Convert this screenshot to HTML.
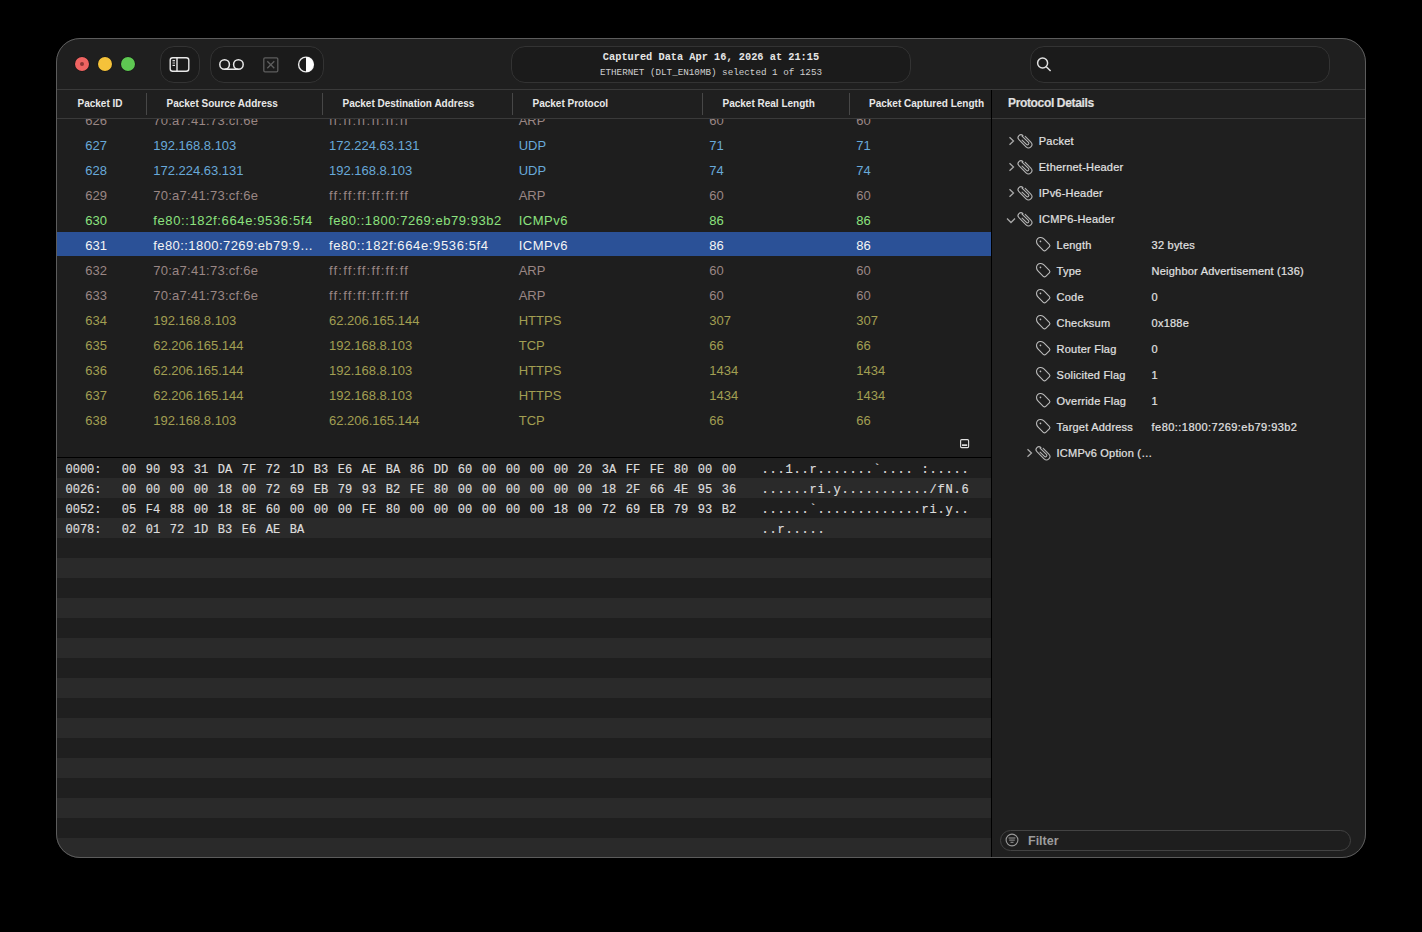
<!DOCTYPE html>
<html><head><meta charset="utf-8"><title>Packet Capture</title>
<style>
*{margin:0;padding:0;box-sizing:border-box}
html,body{width:1422px;height:932px;background:#000;overflow:hidden;font-family:"Liberation Sans",sans-serif}
#win{position:absolute;left:56px;top:38px;width:1310px;height:820px;border-radius:24px;background:#1f1f1f;overflow:hidden}
#inner{position:absolute;left:1px;top:0;width:1309px;height:820px}
#winborder{position:absolute;left:56px;top:38px;width:1310px;height:820px;border-radius:24px;border:1px solid #5c5c5c;pointer-events:none}
.a{position:absolute}
.tl{position:absolute;top:19px;width:14px;height:14px;border-radius:50%;box-shadow:0 0 0 0.6px rgba(0,0,0,0.45)}
.pill{position:absolute;top:8px;height:37px;border-radius:14px;background:#1b1b1b;border:1px solid #333}
.hline{position:absolute;height:1px;background:#3a3a3a}
.vsep{position:absolute;top:55px;width:1px;height:22px;background:#474747}
.hdr{position:absolute;top:61px;font-size:10px;line-height:10px;font-weight:700;color:#e8e8e8;white-space:pre}
.t{position:absolute;white-space:pre}
.cell{position:absolute;font-size:13px;line-height:16px;white-space:pre}
.hx{position:absolute;font-family:"Liberation Mono",monospace;font-size:12px;line-height:14px;color:#dcdcdc;white-space:pre;-webkit-text-stroke:0.2px #dcdcdc}
.tr{position:absolute;font-size:11px;line-height:14px;color:#e2e2e2;white-space:pre;letter-spacing:0.22px;-webkit-text-stroke:0.2px #e2e2e2}
</style></head><body>
<div id="win"><div id="inner">
<div class="tl" style="left:18px;background:#ef6462"><div class="a" style="left:5px;top:5px;width:4px;height:4px;border-radius:50%;background:#8d3634"></div></div>
<div class="tl" style="left:41px;background:#f5c23a"></div>
<div class="tl" style="left:64px;background:#5ec852"></div>
<div class="pill" style="left:103px;width:40px"></div>
<div class="pill" style="left:153px;width:114px"></div>
<div class="pill" style="left:454px;width:400px"></div>
<div class="pill" style="left:973px;width:300px"></div>

<svg class="a" style="left:0;top:0" width="1309" height="52" viewBox="0 0 1309 52">
 <g fill="none" stroke="#e8e8e8" stroke-width="1.4">
  <rect x="113.2" y="19.7" width="18.6" height="13.6" rx="2.5"/>
  <line x1="120" y1="19.7" x2="120" y2="33.3"/>
 </g>
 <g fill="#e8e8e8"><rect x="115.5" y="22.1" width="2.5" height="1.2"/><rect x="115.5" y="24.4" width="2.5" height="1.2" fill="#aaa"/><rect x="115.5" y="26.8" width="2.5" height="1.2"/></g>
 <g fill="none" stroke="#e8e8e8" stroke-width="1.5">
  <circle cx="167.6" cy="26.5" r="4.8"/>
  <circle cx="181.4" cy="26.5" r="4.8"/>
  <line x1="167.6" y1="31.3" x2="181.4" y2="31.3"/>
 </g>
 <g fill="none" stroke="#5e5e5e" stroke-width="1.3">
  <rect x="206.8" y="19.8" width="14" height="14" rx="1.2"/>
  <line x1="210.3" y1="23.3" x2="217.3" y2="30.3"/><line x1="217.3" y1="23.3" x2="210.3" y2="30.3"/>
 </g>
 <circle cx="249" cy="26.5" r="7.4" fill="none" stroke="#e8e8e8" stroke-width="1.4"/>
 <path d="M249 19.1 A7.4 7.4 0 0 1 249 33.9 Z" fill="#ffffff"/>
 <g fill="none" stroke="#e0e0e0" stroke-width="1.5">
  <circle cx="985.6" cy="25" r="5"/>
  <line x1="989.3" y1="28.7" x2="993.6" y2="33"/>
 </g>
</svg>
<div class="t" style="left:454px;width:400px;top:12.5px;text-align:center;font-family:'Liberation Mono',monospace;font-weight:700;font-size:10.3px;line-height:12px;color:#e6e6e6">Captured Data Apr 16, 2026 at 21:15</div>
<div class="t" style="left:454px;width:400px;top:29px;text-align:center;font-family:'Liberation Mono',monospace;font-size:9.25px;line-height:11px;color:#d0d0d0">ETHERNET (DLT_EN10MB) selected 1 of 1253</div>
<div class="hline" style="left:0;top:51px;width:1309px"></div>
<div class="hline" style="left:0;top:80px;width:934px"></div>
<div class="hline" style="left:935px;top:80px;width:374px"></div>
<div class="a" style="left:0;top:81px;width:934px;height:338px;overflow:hidden;background:#1e1e1e"><div class="cell" style="left:28.2px;top:-6px;color:#9a8684">626</div><div class="cell" style="left:96.2px;top:-6px;color:#9a8684;letter-spacing:0.275px">70:a7:41:73:cf:6e</div><div class="cell" style="left:272.0px;top:-6px;color:#9a8684;letter-spacing:1.175px">ff:ff:ff:ff:ff:ff</div><div class="cell" style="left:461.7px;top:-6px;color:#9a8684">ARP</div><div class="cell" style="left:652.2px;top:-6px;color:#9a8684">60</div><div class="cell" style="left:799.3px;top:-6px;color:#9a8684">60</div><div class="cell" style="left:28.2px;top:19px;color:#68a9d9">627</div><div class="cell" style="left:96.2px;top:19px;color:#68a9d9">192.168.8.103</div><div class="cell" style="left:272.0px;top:19px;color:#68a9d9">172.224.63.131</div><div class="cell" style="left:461.7px;top:19px;color:#68a9d9">UDP</div><div class="cell" style="left:652.2px;top:19px;color:#68a9d9">71</div><div class="cell" style="left:799.3px;top:19px;color:#68a9d9">71</div><div class="cell" style="left:28.2px;top:44px;color:#68a9d9">628</div><div class="cell" style="left:96.2px;top:44px;color:#68a9d9">172.224.63.131</div><div class="cell" style="left:272.0px;top:44px;color:#68a9d9">192.168.8.103</div><div class="cell" style="left:461.7px;top:44px;color:#68a9d9">UDP</div><div class="cell" style="left:652.2px;top:44px;color:#68a9d9">74</div><div class="cell" style="left:799.3px;top:44px;color:#68a9d9">74</div><div class="cell" style="left:28.2px;top:69px;color:#9a8684">629</div><div class="cell" style="left:96.2px;top:69px;color:#9a8684;letter-spacing:0.275px">70:a7:41:73:cf:6e</div><div class="cell" style="left:272.0px;top:69px;color:#9a8684;letter-spacing:1.175px">ff:ff:ff:ff:ff:ff</div><div class="cell" style="left:461.7px;top:69px;color:#9a8684">ARP</div><div class="cell" style="left:652.2px;top:69px;color:#9a8684">60</div><div class="cell" style="left:799.3px;top:69px;color:#9a8684">60</div><div class="cell" style="left:28.2px;top:94px;color:#8ce27f">630</div><div class="cell" style="left:96.2px;top:94px;color:#8ce27f;letter-spacing:0.630px">fe80::182f:664e:9536:5f4</div><div class="cell" style="left:272.0px;top:94px;color:#8ce27f;letter-spacing:0.554px">fe80::1800:7269:eb79:93b2</div><div class="cell" style="left:461.7px;top:94px;color:#8ce27f;letter-spacing:0.520px">ICMPv6</div><div class="cell" style="left:652.2px;top:94px;color:#8ce27f">86</div><div class="cell" style="left:799.3px;top:94px;color:#8ce27f">86</div><div class="a" style="left:0;top:113px;width:934px;height:24px;background:#2b5197"></div><div class="cell" style="left:28.2px;top:119px;color:#f4f4f4">631</div><div class="cell" style="left:96.2px;top:119px;color:#f4f4f4;letter-spacing:0.432px">fe80::1800:7269:eb79:9…</div><div class="cell" style="left:272.0px;top:119px;color:#f4f4f4;letter-spacing:0.630px">fe80::182f:664e:9536:5f4</div><div class="cell" style="left:461.7px;top:119px;color:#f4f4f4;letter-spacing:0.520px">ICMPv6</div><div class="cell" style="left:652.2px;top:119px;color:#f4f4f4">86</div><div class="cell" style="left:799.3px;top:119px;color:#f4f4f4">86</div><div class="cell" style="left:28.2px;top:144px;color:#9a8684">632</div><div class="cell" style="left:96.2px;top:144px;color:#9a8684;letter-spacing:0.275px">70:a7:41:73:cf:6e</div><div class="cell" style="left:272.0px;top:144px;color:#9a8684;letter-spacing:1.175px">ff:ff:ff:ff:ff:ff</div><div class="cell" style="left:461.7px;top:144px;color:#9a8684">ARP</div><div class="cell" style="left:652.2px;top:144px;color:#9a8684">60</div><div class="cell" style="left:799.3px;top:144px;color:#9a8684">60</div><div class="cell" style="left:28.2px;top:169px;color:#9a8684">633</div><div class="cell" style="left:96.2px;top:169px;color:#9a8684;letter-spacing:0.275px">70:a7:41:73:cf:6e</div><div class="cell" style="left:272.0px;top:169px;color:#9a8684;letter-spacing:1.175px">ff:ff:ff:ff:ff:ff</div><div class="cell" style="left:461.7px;top:169px;color:#9a8684">ARP</div><div class="cell" style="left:652.2px;top:169px;color:#9a8684">60</div><div class="cell" style="left:799.3px;top:169px;color:#9a8684">60</div><div class="cell" style="left:28.2px;top:194px;color:#a29f52">634</div><div class="cell" style="left:96.2px;top:194px;color:#a29f52">192.168.8.103</div><div class="cell" style="left:272.0px;top:194px;color:#a29f52">62.206.165.144</div><div class="cell" style="left:461.7px;top:194px;color:#a29f52">HTTPS</div><div class="cell" style="left:652.2px;top:194px;color:#a29f52">307</div><div class="cell" style="left:799.3px;top:194px;color:#a29f52">307</div><div class="cell" style="left:28.2px;top:219px;color:#a29f52">635</div><div class="cell" style="left:96.2px;top:219px;color:#a29f52">62.206.165.144</div><div class="cell" style="left:272.0px;top:219px;color:#a29f52">192.168.8.103</div><div class="cell" style="left:461.7px;top:219px;color:#a29f52">TCP</div><div class="cell" style="left:652.2px;top:219px;color:#a29f52">66</div><div class="cell" style="left:799.3px;top:219px;color:#a29f52">66</div><div class="cell" style="left:28.2px;top:244px;color:#a29f52">636</div><div class="cell" style="left:96.2px;top:244px;color:#a29f52">62.206.165.144</div><div class="cell" style="left:272.0px;top:244px;color:#a29f52">192.168.8.103</div><div class="cell" style="left:461.7px;top:244px;color:#a29f52">HTTPS</div><div class="cell" style="left:652.2px;top:244px;color:#a29f52">1434</div><div class="cell" style="left:799.3px;top:244px;color:#a29f52">1434</div><div class="cell" style="left:28.2px;top:269px;color:#a29f52">637</div><div class="cell" style="left:96.2px;top:269px;color:#a29f52">62.206.165.144</div><div class="cell" style="left:272.0px;top:269px;color:#a29f52">192.168.8.103</div><div class="cell" style="left:461.7px;top:269px;color:#a29f52">HTTPS</div><div class="cell" style="left:652.2px;top:269px;color:#a29f52">1434</div><div class="cell" style="left:799.3px;top:269px;color:#a29f52">1434</div><div class="cell" style="left:28.2px;top:294px;color:#a29f52">638</div><div class="cell" style="left:96.2px;top:294px;color:#a29f52">192.168.8.103</div><div class="cell" style="left:272.0px;top:294px;color:#a29f52">62.206.165.144</div><div class="cell" style="left:461.7px;top:294px;color:#a29f52">TCP</div><div class="cell" style="left:652.2px;top:294px;color:#a29f52">66</div><div class="cell" style="left:799.3px;top:294px;color:#a29f52">66</div></div>
<div class="vsep" style="left:89.0px"></div>
<div class="vsep" style="left:265.0px"></div>
<div class="vsep" style="left:455.0px"></div>
<div class="vsep" style="left:645.0px"></div>
<div class="vsep" style="left:792.0px"></div>
<div class="hdr" style="left:20.5px">Packet ID</div>
<div class="hdr" style="left:109.5px">Packet Source Address</div>
<div class="hdr" style="left:285.5px">Packet Destination Address</div>
<div class="hdr" style="left:475.5px">Packet Protocol</div>
<div class="hdr" style="left:665.5px">Packet Real Length</div>
<div class="hdr" style="left:812.0px">Packet Captured Length</div>
<svg class="a" style="left:903px;top:401px" width="10" height="10" viewBox="0 0 10 10"><rect x="0.6" y="0.6" width="8" height="8" rx="1.1" fill="none" stroke="#e0e0e0" stroke-width="1.15"/><rect x="2" y="5.3" width="5.2" height="1.7" fill="#dcdcdc"/></svg>
<div class="a" style="left:934px;top:52px;width:1px;height:768px;background:#000"></div>
<div class="a" style="left:0;top:419px;width:934px;height:1px;background:#000"></div>
<div class="a" style="left:0;top:420px;width:934px;height:400px;overflow:hidden"><div class="a" style="left:0;top:0px;width:934px;height:20px;background:#1f1f1f"></div><div class="a" style="left:0;top:20px;width:934px;height:20px;background:#2a2a2a"></div><div class="a" style="left:0;top:40px;width:934px;height:20px;background:#1f1f1f"></div><div class="a" style="left:0;top:60px;width:934px;height:20px;background:#2a2a2a"></div><div class="a" style="left:0;top:80px;width:934px;height:20px;background:#1f1f1f"></div><div class="a" style="left:0;top:100px;width:934px;height:20px;background:#2a2a2a"></div><div class="a" style="left:0;top:120px;width:934px;height:20px;background:#1f1f1f"></div><div class="a" style="left:0;top:140px;width:934px;height:20px;background:#2a2a2a"></div><div class="a" style="left:0;top:160px;width:934px;height:20px;background:#1f1f1f"></div><div class="a" style="left:0;top:180px;width:934px;height:20px;background:#2a2a2a"></div><div class="a" style="left:0;top:200px;width:934px;height:20px;background:#1f1f1f"></div><div class="a" style="left:0;top:220px;width:934px;height:20px;background:#2a2a2a"></div><div class="a" style="left:0;top:240px;width:934px;height:20px;background:#1f1f1f"></div><div class="a" style="left:0;top:260px;width:934px;height:20px;background:#2a2a2a"></div><div class="a" style="left:0;top:280px;width:934px;height:20px;background:#1f1f1f"></div><div class="a" style="left:0;top:300px;width:934px;height:20px;background:#2a2a2a"></div><div class="a" style="left:0;top:320px;width:934px;height:20px;background:#1f1f1f"></div><div class="a" style="left:0;top:340px;width:934px;height:20px;background:#2a2a2a"></div><div class="a" style="left:0;top:360px;width:934px;height:20px;background:#1f1f1f"></div><div class="a" style="left:0;top:380px;width:934px;height:20px;background:#2a2a2a"></div><div class="hx" style="left:8.5px;top:5px">0000:</div><div class="hx" style="left:64.8px;top:5px">00</div><div class="hx" style="left:88.8px;top:5px">90</div><div class="hx" style="left:112.8px;top:5px">93</div><div class="hx" style="left:136.8px;top:5px">31</div><div class="hx" style="left:160.8px;top:5px">DA</div><div class="hx" style="left:184.8px;top:5px">7F</div><div class="hx" style="left:208.8px;top:5px">72</div><div class="hx" style="left:232.8px;top:5px">1D</div><div class="hx" style="left:256.8px;top:5px">B3</div><div class="hx" style="left:280.8px;top:5px">E6</div><div class="hx" style="left:304.8px;top:5px">AE</div><div class="hx" style="left:328.8px;top:5px">BA</div><div class="hx" style="left:352.8px;top:5px">86</div><div class="hx" style="left:376.8px;top:5px">DD</div><div class="hx" style="left:400.8px;top:5px">60</div><div class="hx" style="left:424.8px;top:5px">00</div><div class="hx" style="left:448.8px;top:5px">00</div><div class="hx" style="left:472.8px;top:5px">00</div><div class="hx" style="left:496.8px;top:5px">00</div><div class="hx" style="left:520.8px;top:5px">20</div><div class="hx" style="left:544.8px;top:5px">3A</div><div class="hx" style="left:568.8px;top:5px">FF</div><div class="hx" style="left:592.8px;top:5px">FE</div><div class="hx" style="left:616.8px;top:5px">80</div><div class="hx" style="left:640.8px;top:5px">00</div><div class="hx" style="left:664.8px;top:5px">00</div><div class="hx" style="left:704.5px;top:5px;letter-spacing:0.80px">...1..r.......`.... :.....</div><div class="hx" style="left:8.5px;top:25px">0026:</div><div class="hx" style="left:64.8px;top:25px">00</div><div class="hx" style="left:88.8px;top:25px">00</div><div class="hx" style="left:112.8px;top:25px">00</div><div class="hx" style="left:136.8px;top:25px">00</div><div class="hx" style="left:160.8px;top:25px">18</div><div class="hx" style="left:184.8px;top:25px">00</div><div class="hx" style="left:208.8px;top:25px">72</div><div class="hx" style="left:232.8px;top:25px">69</div><div class="hx" style="left:256.8px;top:25px">EB</div><div class="hx" style="left:280.8px;top:25px">79</div><div class="hx" style="left:304.8px;top:25px">93</div><div class="hx" style="left:328.8px;top:25px">B2</div><div class="hx" style="left:352.8px;top:25px">FE</div><div class="hx" style="left:376.8px;top:25px">80</div><div class="hx" style="left:400.8px;top:25px">00</div><div class="hx" style="left:424.8px;top:25px">00</div><div class="hx" style="left:448.8px;top:25px">00</div><div class="hx" style="left:472.8px;top:25px">00</div><div class="hx" style="left:496.8px;top:25px">00</div><div class="hx" style="left:520.8px;top:25px">00</div><div class="hx" style="left:544.8px;top:25px">18</div><div class="hx" style="left:568.8px;top:25px">2F</div><div class="hx" style="left:592.8px;top:25px">66</div><div class="hx" style="left:616.8px;top:25px">4E</div><div class="hx" style="left:640.8px;top:25px">95</div><div class="hx" style="left:664.8px;top:25px">36</div><div class="hx" style="left:704.5px;top:25px;letter-spacing:0.80px">......ri.y.........../fN.6</div><div class="hx" style="left:8.5px;top:45px">0052:</div><div class="hx" style="left:64.8px;top:45px">05</div><div class="hx" style="left:88.8px;top:45px">F4</div><div class="hx" style="left:112.8px;top:45px">88</div><div class="hx" style="left:136.8px;top:45px">00</div><div class="hx" style="left:160.8px;top:45px">18</div><div class="hx" style="left:184.8px;top:45px">8E</div><div class="hx" style="left:208.8px;top:45px">60</div><div class="hx" style="left:232.8px;top:45px">00</div><div class="hx" style="left:256.8px;top:45px">00</div><div class="hx" style="left:280.8px;top:45px">00</div><div class="hx" style="left:304.8px;top:45px">FE</div><div class="hx" style="left:328.8px;top:45px">80</div><div class="hx" style="left:352.8px;top:45px">00</div><div class="hx" style="left:376.8px;top:45px">00</div><div class="hx" style="left:400.8px;top:45px">00</div><div class="hx" style="left:424.8px;top:45px">00</div><div class="hx" style="left:448.8px;top:45px">00</div><div class="hx" style="left:472.8px;top:45px">00</div><div class="hx" style="left:496.8px;top:45px">18</div><div class="hx" style="left:520.8px;top:45px">00</div><div class="hx" style="left:544.8px;top:45px">72</div><div class="hx" style="left:568.8px;top:45px">69</div><div class="hx" style="left:592.8px;top:45px">EB</div><div class="hx" style="left:616.8px;top:45px">79</div><div class="hx" style="left:640.8px;top:45px">93</div><div class="hx" style="left:664.8px;top:45px">B2</div><div class="hx" style="left:704.5px;top:45px;letter-spacing:0.80px">......`.............ri.y..</div><div class="hx" style="left:8.5px;top:65px">0078:</div><div class="hx" style="left:64.8px;top:65px">02</div><div class="hx" style="left:88.8px;top:65px">01</div><div class="hx" style="left:112.8px;top:65px">72</div><div class="hx" style="left:136.8px;top:65px">1D</div><div class="hx" style="left:160.8px;top:65px">B3</div><div class="hx" style="left:184.8px;top:65px">E6</div><div class="hx" style="left:208.8px;top:65px">AE</div><div class="hx" style="left:232.8px;top:65px">BA</div><div class="hx" style="left:704.5px;top:65px;letter-spacing:0.80px">..r.....</div></div>
<div class="t" style="left:951px;top:58.3px;font-size:12px;line-height:14px;font-weight:700;letter-spacing:-0.35px;color:#e0e0e0;-webkit-text-stroke:0.15px #e0e0e0">Protocol Details</div>
<svg class="a" style="left:950.5px;top:97.8px" width="8" height="10" viewBox="0 0 8 10"><path d="M1.5 1.2 L5.5 5 L1.5 8.8" fill="none" stroke="#a8a8a8" stroke-width="1.3"/></svg>
<svg class="a" style="left:956.0px;top:91.0px" width="24" height="24" viewBox="-12 -12 24 24"><path transform="rotate(-45) scale(0.87)" d="M3.9 -3.6 L3.9 5.6 A3.9 3.9 0 0 1 -3.9 5.6 L-3.9 -6 A3.3 3.3 0 0 1 2.7 -6 M1.6 -6.4 L1.6 4 A1.6 1.6 0 0 1 -1.6 4 L-1.6 -3.2" fill="none" stroke="#b4b4b4" stroke-width="1.25" stroke-linecap="round"/></svg>
<div class="tr" style="left:981.8px;top:95.8px">Packet</div>
<svg class="a" style="left:950.5px;top:123.8px" width="8" height="10" viewBox="0 0 8 10"><path d="M1.5 1.2 L5.5 5 L1.5 8.8" fill="none" stroke="#a8a8a8" stroke-width="1.3"/></svg>
<svg class="a" style="left:956.0px;top:117.0px" width="24" height="24" viewBox="-12 -12 24 24"><path transform="rotate(-45) scale(0.87)" d="M3.9 -3.6 L3.9 5.6 A3.9 3.9 0 0 1 -3.9 5.6 L-3.9 -6 A3.3 3.3 0 0 1 2.7 -6 M1.6 -6.4 L1.6 4 A1.6 1.6 0 0 1 -1.6 4 L-1.6 -3.2" fill="none" stroke="#b4b4b4" stroke-width="1.25" stroke-linecap="round"/></svg>
<div class="tr" style="left:981.8px;top:121.8px">Ethernet-Header</div>
<svg class="a" style="left:950.5px;top:149.8px" width="8" height="10" viewBox="0 0 8 10"><path d="M1.5 1.2 L5.5 5 L1.5 8.8" fill="none" stroke="#a8a8a8" stroke-width="1.3"/></svg>
<svg class="a" style="left:956.0px;top:143.0px" width="24" height="24" viewBox="-12 -12 24 24"><path transform="rotate(-45) scale(0.87)" d="M3.9 -3.6 L3.9 5.6 A3.9 3.9 0 0 1 -3.9 5.6 L-3.9 -6 A3.3 3.3 0 0 1 2.7 -6 M1.6 -6.4 L1.6 4 A1.6 1.6 0 0 1 -1.6 4 L-1.6 -3.2" fill="none" stroke="#b4b4b4" stroke-width="1.25" stroke-linecap="round"/></svg>
<div class="tr" style="left:981.8px;top:147.8px">IPv6-Header</div>
<svg class="a" style="left:948.8px;top:178.8px" width="10" height="8" viewBox="0 0 10 8"><path d="M1 1.5 L5 5.5 L9 1.5" fill="none" stroke="#a8a8a8" stroke-width="1.3"/></svg>
<svg class="a" style="left:956.0px;top:169.0px" width="24" height="24" viewBox="-12 -12 24 24"><path transform="rotate(-45) scale(0.87)" d="M3.9 -3.6 L3.9 5.6 A3.9 3.9 0 0 1 -3.9 5.6 L-3.9 -6 A3.3 3.3 0 0 1 2.7 -6 M1.6 -6.4 L1.6 4 A1.6 1.6 0 0 1 -1.6 4 L-1.6 -3.2" fill="none" stroke="#b4b4b4" stroke-width="1.25" stroke-linecap="round"/></svg>
<div class="tr" style="left:981.8px;top:173.8px">ICMP6-Header</div>
<svg class="a" style="left:974.0px;top:194.4px" width="24" height="24" viewBox="-12 -12 24 24"><path transform="rotate(-45) scale(0.93)" d="M-4.6 -2.8 L-4.6 5 Q-4.6 6.9 -2.7 6.9 L2.7 6.9 Q4.6 6.9 4.6 5 L4.6 -2.8 C4.6 -5.6 2.6 -8.2 0 -8.2 C-2.6 -8.2 -4.6 -5.6 -4.6 -2.8 Z" fill="none" stroke="#bcbcbc" stroke-width="1.15" stroke-linejoin="round"/><circle transform="rotate(-45)" cx="0" cy="-3.6" r="0.85" fill="#bcbcbc"/></svg>
<div class="tr" style="left:999.6px;top:199.8px">Length</div>
<div class="tr" style="left:1094.6px;top:199.8px">32 bytes</div>
<svg class="a" style="left:974.0px;top:220.4px" width="24" height="24" viewBox="-12 -12 24 24"><path transform="rotate(-45) scale(0.93)" d="M-4.6 -2.8 L-4.6 5 Q-4.6 6.9 -2.7 6.9 L2.7 6.9 Q4.6 6.9 4.6 5 L4.6 -2.8 C4.6 -5.6 2.6 -8.2 0 -8.2 C-2.6 -8.2 -4.6 -5.6 -4.6 -2.8 Z" fill="none" stroke="#bcbcbc" stroke-width="1.15" stroke-linejoin="round"/><circle transform="rotate(-45)" cx="0" cy="-3.6" r="0.85" fill="#bcbcbc"/></svg>
<div class="tr" style="left:999.6px;top:225.8px">Type</div>
<div class="tr" style="left:1094.6px;top:225.8px">Neighbor Advertisement (136)</div>
<svg class="a" style="left:974.0px;top:246.4px" width="24" height="24" viewBox="-12 -12 24 24"><path transform="rotate(-45) scale(0.93)" d="M-4.6 -2.8 L-4.6 5 Q-4.6 6.9 -2.7 6.9 L2.7 6.9 Q4.6 6.9 4.6 5 L4.6 -2.8 C4.6 -5.6 2.6 -8.2 0 -8.2 C-2.6 -8.2 -4.6 -5.6 -4.6 -2.8 Z" fill="none" stroke="#bcbcbc" stroke-width="1.15" stroke-linejoin="round"/><circle transform="rotate(-45)" cx="0" cy="-3.6" r="0.85" fill="#bcbcbc"/></svg>
<div class="tr" style="left:999.6px;top:251.8px">Code</div>
<div class="tr" style="left:1094.6px;top:251.8px">0</div>
<svg class="a" style="left:974.0px;top:272.4px" width="24" height="24" viewBox="-12 -12 24 24"><path transform="rotate(-45) scale(0.93)" d="M-4.6 -2.8 L-4.6 5 Q-4.6 6.9 -2.7 6.9 L2.7 6.9 Q4.6 6.9 4.6 5 L4.6 -2.8 C4.6 -5.6 2.6 -8.2 0 -8.2 C-2.6 -8.2 -4.6 -5.6 -4.6 -2.8 Z" fill="none" stroke="#bcbcbc" stroke-width="1.15" stroke-linejoin="round"/><circle transform="rotate(-45)" cx="0" cy="-3.6" r="0.85" fill="#bcbcbc"/></svg>
<div class="tr" style="left:999.6px;top:277.8px">Checksum</div>
<div class="tr" style="left:1094.6px;top:277.8px">0x188e</div>
<svg class="a" style="left:974.0px;top:298.4px" width="24" height="24" viewBox="-12 -12 24 24"><path transform="rotate(-45) scale(0.93)" d="M-4.6 -2.8 L-4.6 5 Q-4.6 6.9 -2.7 6.9 L2.7 6.9 Q4.6 6.9 4.6 5 L4.6 -2.8 C4.6 -5.6 2.6 -8.2 0 -8.2 C-2.6 -8.2 -4.6 -5.6 -4.6 -2.8 Z" fill="none" stroke="#bcbcbc" stroke-width="1.15" stroke-linejoin="round"/><circle transform="rotate(-45)" cx="0" cy="-3.6" r="0.85" fill="#bcbcbc"/></svg>
<div class="tr" style="left:999.6px;top:303.8px">Router Flag</div>
<div class="tr" style="left:1094.6px;top:303.8px">0</div>
<svg class="a" style="left:974.0px;top:324.4px" width="24" height="24" viewBox="-12 -12 24 24"><path transform="rotate(-45) scale(0.93)" d="M-4.6 -2.8 L-4.6 5 Q-4.6 6.9 -2.7 6.9 L2.7 6.9 Q4.6 6.9 4.6 5 L4.6 -2.8 C4.6 -5.6 2.6 -8.2 0 -8.2 C-2.6 -8.2 -4.6 -5.6 -4.6 -2.8 Z" fill="none" stroke="#bcbcbc" stroke-width="1.15" stroke-linejoin="round"/><circle transform="rotate(-45)" cx="0" cy="-3.6" r="0.85" fill="#bcbcbc"/></svg>
<div class="tr" style="left:999.6px;top:329.8px">Solicited Flag</div>
<div class="tr" style="left:1094.6px;top:329.8px">1</div>
<svg class="a" style="left:974.0px;top:350.4px" width="24" height="24" viewBox="-12 -12 24 24"><path transform="rotate(-45) scale(0.93)" d="M-4.6 -2.8 L-4.6 5 Q-4.6 6.9 -2.7 6.9 L2.7 6.9 Q4.6 6.9 4.6 5 L4.6 -2.8 C4.6 -5.6 2.6 -8.2 0 -8.2 C-2.6 -8.2 -4.6 -5.6 -4.6 -2.8 Z" fill="none" stroke="#bcbcbc" stroke-width="1.15" stroke-linejoin="round"/><circle transform="rotate(-45)" cx="0" cy="-3.6" r="0.85" fill="#bcbcbc"/></svg>
<div class="tr" style="left:999.6px;top:355.8px">Override Flag</div>
<div class="tr" style="left:1094.6px;top:355.8px">1</div>
<svg class="a" style="left:974.0px;top:376.4px" width="24" height="24" viewBox="-12 -12 24 24"><path transform="rotate(-45) scale(0.93)" d="M-4.6 -2.8 L-4.6 5 Q-4.6 6.9 -2.7 6.9 L2.7 6.9 Q4.6 6.9 4.6 5 L4.6 -2.8 C4.6 -5.6 2.6 -8.2 0 -8.2 C-2.6 -8.2 -4.6 -5.6 -4.6 -2.8 Z" fill="none" stroke="#bcbcbc" stroke-width="1.15" stroke-linejoin="round"/><circle transform="rotate(-45)" cx="0" cy="-3.6" r="0.85" fill="#bcbcbc"/></svg>
<div class="tr" style="left:999.6px;top:381.8px">Target Address</div>
<div class="tr" style="left:1094.6px;top:381.8px;letter-spacing:0.45px">fe80::1800:7269:eb79:93b2</div>
<svg class="a" style="left:968.5px;top:409.8px" width="8" height="10" viewBox="0 0 8 10"><path d="M1.5 1.2 L5.5 5 L1.5 8.8" fill="none" stroke="#a8a8a8" stroke-width="1.3"/></svg>
<svg class="a" style="left:974.0px;top:403.0px" width="24" height="24" viewBox="-12 -12 24 24"><path transform="rotate(-45) scale(0.87)" d="M3.9 -3.6 L3.9 5.6 A3.9 3.9 0 0 1 -3.9 5.6 L-3.9 -6 A3.3 3.3 0 0 1 2.7 -6 M1.6 -6.4 L1.6 4 A1.6 1.6 0 0 1 -1.6 4 L-1.6 -3.2" fill="none" stroke="#b4b4b4" stroke-width="1.25" stroke-linecap="round"/></svg>
<div class="tr" style="left:999.6px;top:407.8px">ICMPv6 Option (…</div>
<div class="a" style="left:943px;top:792px;width:351px;height:21px;border-radius:10.5px;border:1.3px solid #434343;background:#1e1e1e"></div>
<svg class="a" style="left:947px;top:794px" width="16" height="16" viewBox="0 0 16 16"><circle cx="8" cy="8" r="5.9" fill="none" stroke="#9a9a9a" stroke-width="1.1"/><line x1="4.6" y1="6" x2="11.4" y2="6" stroke="#9a9a9a" stroke-width="1"/><line x1="5.2" y1="8.1" x2="10.8" y2="8.1" stroke="#9a9a9a" stroke-width="1"/><line x1="6.5" y1="10.3" x2="9.5" y2="10.3" stroke="#9a9a9a" stroke-width="1"/></svg>
<div class="t" style="left:971.0px;top:795.5px;font-size:12.5px;line-height:14px;font-weight:700;color:#9c9c9c">Filter</div>
</div></div>
<div id="winborder"></div>
</body></html>
